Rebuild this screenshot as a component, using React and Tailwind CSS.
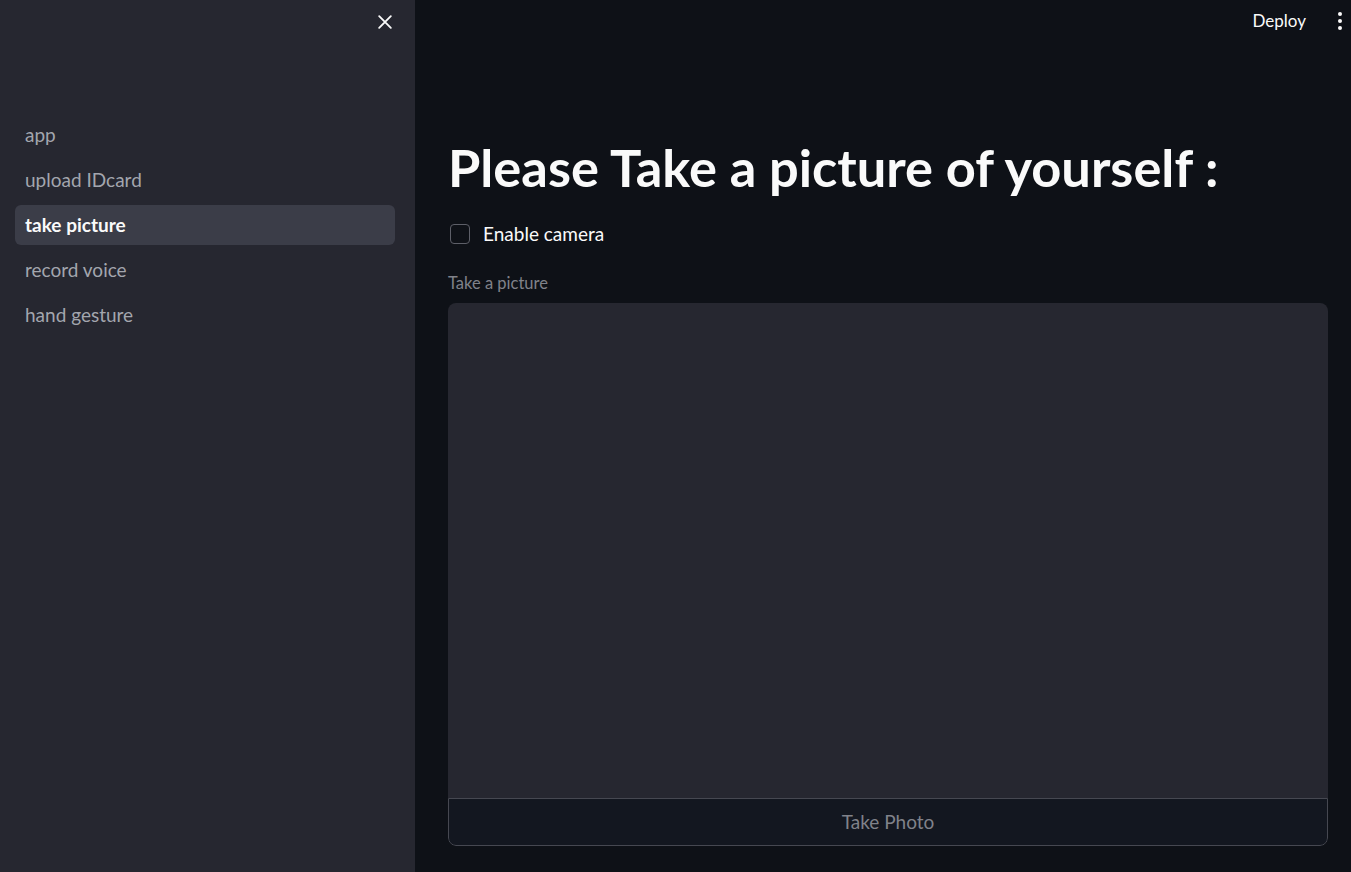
import React from "react";

const font = { fontFamily: "Lato, 'Noto Sans', sans-serif" };

function NavItem({ label, active }) {
  return (
    <div
      className={`h-10 flex items-center px-[10px] rounded-md text-[19px] ${
        active ? "bg-[#3b3d48] text-[#fafafa] font-bold" : "text-[#a3a6ae]"
      }`}
    >
      {label}
    </div>
  );
}

export default function App() {
  return (
    <div className="w-[1351px] h-[872px] flex overflow-hidden bg-[#0e1117]" style={font}>
      <aside className="w-[415px] shrink-0 h-full bg-[#262730] flex flex-col">
        <div className="h-[44px] flex items-center justify-end pr-[20px]">
          <svg width="20" height="20" viewBox="0 0 24 24" fill="none" stroke="#fafafa" strokeWidth="2.2" strokeLinecap="round">
            <path d="M5 5 L19 19 M19 5 L5 19" />
          </svg>
        </div>
        <nav className="mt-[71px] pl-[15px] pr-[20px] flex flex-col gap-[5px]">
          <NavItem label="app" />
          <NavItem label="upload IDcard" />
          <NavItem label="take picture" active />
          <NavItem label="record voice" />
          <NavItem label="hand gesture" />
        </nav>
      </aside>
      <main className="flex-1 flex flex-col">
        <header className="h-[42px] flex items-center justify-end pr-[8px] gap-[31px]">
          <span className="text-[17px] text-[#fafafa]">Deploy</span>
          <svg width="6" height="20" viewBox="0 0 6 20" fill="#fafafa">
            <circle cx="3" cy="3" r="2" />
            <circle cx="3" cy="10" r="2" />
            <circle cx="3" cy="17" r="2" />
          </svg>
        </header>
        <div className="pl-[33px] pr-[23px] flex flex-col">
          <h1 className="mt-[95px] text-[52.4px] font-bold text-[#fafafa] leading-[60px] whitespace-nowrap">
            Please Take a picture of yourself :
          </h1>
          <label className="mt-[23px] h-[28px] flex items-center gap-[13px]">
            <span className="w-[20px] h-[20px] ml-[2px] rounded-[4px] border border-[#5d5f68]" />
            <span className="text-[19px] text-[#fafafa] leading-[28px]">Enable camera</span>
          </label>
          <div className="mt-[25px] text-[16.5px] leading-[20px] text-[#80828a]">Take a picture</div>
          <div className="mt-[10px] h-[543px] flex flex-col rounded-lg overflow-hidden">
            <div className="flex-1 bg-[#262730]" />
            <button className="h-[48px] shrink-0 bg-[#131720] border border-[#464851] rounded-b-lg text-[19px] text-[#80828a]">
              Take Photo
            </button>
          </div>
        </div>
      </main>
    </div>
  );
}
